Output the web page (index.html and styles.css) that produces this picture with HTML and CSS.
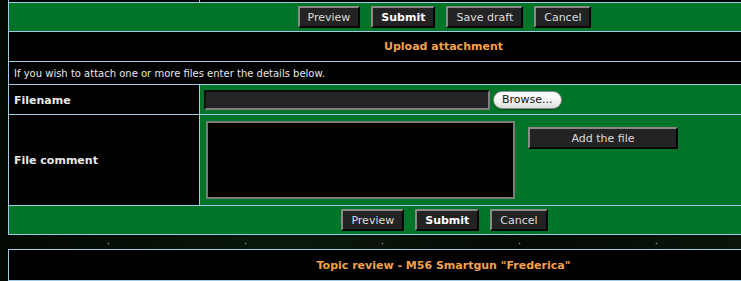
FILE: index.html
```html
<!DOCTYPE html>
<html>
<head>
    <title>Post a reply - Upload attachment</title>
    <link rel="stylesheet" href="styles.css">
</head>
<body>
    <table class="forumline form-table" cellspacing="1">
        <tr class="row-cut">
            <td class="row1 col-label"></td>
            <td class="row1"></td>
        </tr>
        <tr>
            <td class="cat-bottom" colspan="2">
                <div class="button-bar">
                    <button class="btn">Preview</button>
                    <button class="btn btn-main">Submit</button>
                    <button class="btn">Save draft</button>
                    <button class="btn">Cancel</button>
                </div>
            </td>
        </tr>
        <tr>
            <th class="thead" colspan="2">Upload attachment</th>
        </tr>
        <tr>
            <td class="row-info" colspan="2">If you wish to attach one or more files enter the details below.</td>
        </tr>
        <tr class="row-file">
            <td class="row1 label">Filename</td>
            <td class="row2 file-cell">
                <div class="file-field">
                    <input type="text" class="file-input">
                    <button class="browse-btn">Browse...</button>
                </div>
            </td>
        </tr>
        <tr class="row-comment">
            <td class="row1 label">File comment</td>
            <td class="row2 comment-cell">
                <div class="comment-field">
                    <textarea class="comment-box"></textarea>
                    <button class="btn btn-wide">Add the file</button>
                </div>
            </td>
        </tr>
        <tr>
            <td class="cat-bottom" colspan="2">
                <div class="button-bar">
                    <button class="btn">Preview</button>
                    <button class="btn btn-main">Submit</button>
                    <button class="btn">Cancel</button>
                </div>
            </td>
        </tr>
    </table>

    <table class="forumline review-table" cellspacing="1">
        <tr>
            <th class="thead">Topic review - M56 Smartgun "Frederica"</th>
        </tr>
    </table>
</body>
</html>
```

FILE: styles.css
```css
* {
    box-sizing: border-box;
}

html {
    overflow: hidden;
}

body {
    margin: 0 0 0 8px;
    font-family: 'DejaVu Sans', Verdana, sans-serif;
    color: #e8e8e8;
    background-color: #020402;
    background-image:
        radial-gradient(circle, rgba(255, 255, 255, 0.8) 0.5px, transparent 1.3px),
        radial-gradient(circle, rgba(200, 230, 200, 0.55) 0.5px, transparent 1.2px),
        radial-gradient(circle, rgba(255, 255, 255, 0.45) 0.4px, transparent 1px),
        linear-gradient(90deg, #020802, #0a1a0a 40%, #040a04 70%, #0a160a);
    background-size: 83px 67px, 137px 43px, 59px 29px, 100% 100%;
    background-position: 2px 30px, 40px 7px, 21px 11px, 0 0;
}

.forumline {
    width: 871px;
    border-spacing: 1px;
    background-color: #a3cbe6;
}

.form-table {
    margin-top: -3px;
}

.review-table {
    margin-top: 14px;
}

td, th {
    padding: 0;
}

.row-cut td {
    height: 4px;
}

.row1 {
    background-color: #000;
}

.row2 {
    background-color: #007527;
}

.col-label {
    width: 190px;
}

.cat-bottom {
    background-color: #007527;
    height: 28px;
}

.thead {
    background-color: #000;
    color: #f4a24a;
    font-size: 11px;
    font-weight: bold;
    height: 29px;
    text-align: center;
}

.review-table .thead {
    height: 30px;
}

.row-info {
    background-color: #000;
    font-size: 10px;
    height: 22px;
    padding: 0 5px;
}

.label {
    font-size: 11px;
    font-weight: bold;
    padding: 1px 5px 0;
}

.row-file td {
    height: 29px;
}

.row-comment td {
    height: 90px;
}

/* buttons */

.button-bar {
    display: flex;
    justify-content: center;
    gap: 11px;
    padding-left: 2px;
}

.btn {
    font-family: 'DejaVu Sans', Verdana, sans-serif;
    font-size: 11px;
    color: #ddd;
    background-color: #232323;
    height: 22px;
    padding: 0 8px;
    border: 2px solid;
    border-color: #8a8a8a #000 #000 #8a8a8a;
}

.btn-main {
    font-weight: bold;
    color: #fff;
}

.btn-wide {
    width: 150px;
    margin: 6px 0 0 13px;
}

/* file fields */

.file-cell {
    padding: 0 4px;
}

.file-field {
    display: flex;
    align-items: center;
    gap: 3px;
}

.file-input {
    width: 286px;
    height: 20px;
    background-color: #242424;
    border: 2px solid;
    border-color: #0c0c0c #808080 #808080 #0c0c0c;
}

.browse-btn {
    font-family: 'Lucida Grande', 'DejaVu Sans', sans-serif;
    font-size: 11px;
    color: #111;
    height: 18px;
    padding: 0 8px;
    border: 1px solid #8c8c8c;
    border-radius: 9px;
    background: linear-gradient(#fff, #f2f2f2 60%, #dcdcdc);
    box-shadow: 0 1px 1px rgba(0, 0, 0, 0.35);
}

.comment-cell {
    padding: 0 6px;
}

.comment-field {
    display: flex;
    align-items: flex-start;
}

.comment-box {
    width: 309px;
    height: 78px;
    margin: 0;
    background-color: #000;
    border: 2px solid #7c7c7c;
    resize: none;
}
```
